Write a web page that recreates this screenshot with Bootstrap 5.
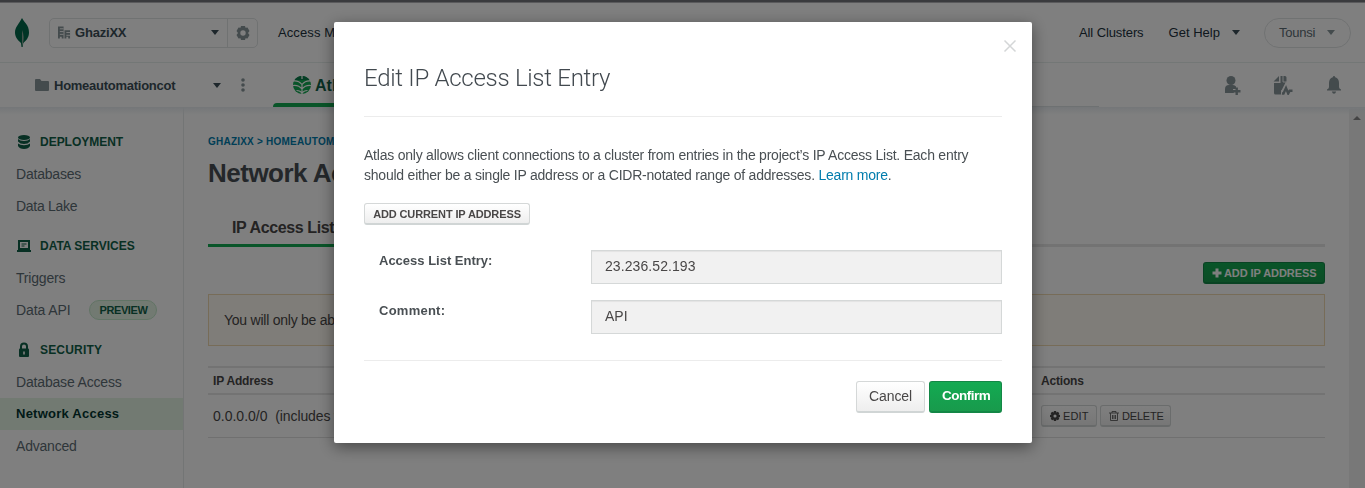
<!DOCTYPE html>
<html lang="en">
<head>
<meta charset="utf-8">
<meta name="viewport" content="width=device-width, initial-scale=1">
<title>Network Access</title>
<link href="https://cdn.jsdelivr.net/npm/bootstrap@5.3.0/dist/css/bootstrap.min.css" rel="stylesheet">
<style>
body{font:13px/20px "Liberation Sans",Arial,sans-serif;color:#3d4f58;height:100vh;overflow:hidden;background:#fff}
svg{display:block;flex:none}
.window-edge{height:3px;background:#75767d;border-bottom:1px solid #b4b4b8}
.org-bar{height:60px;border-bottom:1px solid #e7eeec;padding:0 14px;color:#21313c}
.org-picker{width:209px;height:30px;margin-left:19px;border:1px solid #e1e4e5;border-radius:5px}
.org-name{color:#3d4f58;letter-spacing:-.2px}
.org-gear{width:30px;border-left:1px solid #e1e4e5}
.caret{width:0;height:0;border:4px solid transparent;border-top:5px solid #3d4f58;border-bottom:0}
.user-pill{width:87px;height:30px;border:1px solid #e1e4e5;border-radius:15px;padding:0 15px 0 14px;color:#5d6c74}
.user-pill .caret{border-top-color:#89979b}
.project-bar{height:44px;padding-left:35px;padding-right:21px;position:relative}
.atlas-tab{width:88px;height:44px;padding:0 0 4px 21px;margin-left:27px;font-size:16px;color:#116149}
.atlas-tab::after{content:"";position:absolute;left:273px;bottom:0;width:100px;height:4px;background:#13aa52;border-radius:4px 0 0 0}
.tab-track{position:absolute;left:373px;width:726px;bottom:0;height:1px;background:#dde3e5}
.workspace{height:381px;position:relative}
.workspace::before{content:"";position:absolute;left:0;right:0;top:0;height:8px;background:linear-gradient(#e9eef2,rgba(255,255,255,0));z-index:1}
.side{width:184px;border-right:1px solid #e7eaeb;padding-top:19px}
.side-item{height:32px;padding-left:16px;letter-spacing:-.2px;color:#5d6c74;font-size:14px}
.side-head{font-size:12px;font-weight:700;letter-spacing:-.02px;color:#116149}
.side-head svg{width:16px;margin-right:8px}
.side-group+.side-group{margin-top:8px}
.side-item.current{background:#e4f4e4;color:#023430;font-weight:700;font-size:13px;letter-spacing:.24px}
.preview-tag{width:68px;height:20px;border:1px solid #c3e7ca;border-radius:10px;background:#e4f4e4;color:#116149;font-size:11px;font-weight:700;letter-spacing:-.42px;line-height:19px;margin-left:19px;text-align:center}
.main-pane{padding:25px 24px 0;color:#494747;position:relative}
.crumbs{font-size:10px;line-height:20px;font-weight:700;letter-spacing:.22px;color:#007cad}
.page-title{font-size:26px;line-height:32px;font-weight:700;letter-spacing:-.5px;margin:5px 0 0;color:#494f54}
.page-tabs{height:54px;margin-top:4px;border-bottom:3px solid #e7e7e7;font-size:16px;font-weight:700;letter-spacing:-.38px}
.page-tabs>div{height:54px;padding:25px 24px 0;border-bottom:3px solid #13aa52}
.btn-flat{font-size:11px;line-height:20px;height:22px;padding:0 8px;border-radius:3px;border:1px solid #d5d8d8;border-bottom:2px solid #d0d5d5;background:linear-gradient(#fff,#eee);color:#494747}
.btn-leaf{border:1px solid #138746;border-bottom-width:2px;background:linear-gradient(#13aa52,#189a4c);color:#fff;font-weight:700}
.notice{height:52px;margin-top:10px;padding:15px;background:#fefaf2;border:1px solid #efd9b0;font-size:14px;letter-spacing:-.24px}
.access-table{margin-top:20px}
.access-table>div{padding-left:5px}
.at-head{height:29px;border:solid #e7e7e7;border-width:2px 0;font-size:12px;font-weight:700;letter-spacing:-.18px}
.at-row{height:43px;border-bottom:1px solid #e1e1e1}
.at-row .at-main{font-size:14px}
.at-main{width:828px}
.scroller{width:16px;margin-top:2px;background:#f1f1f1}
.dim{--bs-backdrop-opacity:.5}
.entry-dialog{width:698px;max-width:none;margin:22px 0 0 334px}
.entry-dialog .modal-content{height:421px;border:0;border-radius:2px;padding:0 30px;box-shadow:0 4px 16px rgba(0,0,0,.45);color:#494747}
.entry-dialog .modal-header{height:95px;padding:17px 0 0;border-bottom:1px solid #ececec;border-radius:0}
.entry-title{font:300 24px/30px Roboto,"Liberation Sans",sans-serif;letter-spacing:-.28px;color:#42494f}
.dismiss{position:absolute;right:15px;top:17px;padding:0;border:0;background:none}
.entry-dialog .modal-body{padding:28px 0 0}
.intro{margin:0 -10px 18px 0;font-size:14px;letter-spacing:-.225px;color:#494f53}
.intro a{color:#007cad;text-decoration:none}
.field-row{height:34px;margin-bottom:16px}
.field-row label{width:227px;padding:1px 0 0 15px;font-weight:700;line-height:20px;letter-spacing:0;color:#494f53}
.field-row .form-control{width:411px;height:34px;padding:0 13px 2px;border:1px solid #d5d8d8;border-radius:0;background:#f1f1f1;box-shadow:inset 0 1px 1px rgba(0,0,0,.06);font-size:14px;color:#494747}
.entry-dialog .modal-footer{height:83px;border-top:1px solid #ececec;border-radius:0;padding:20px 0 31px;gap:4px}
.btn-act{height:32px;font-size:14px;line-height:28px;padding:0 12px;margin:0}
</style>
</head>
<body>
<div class="window-edge"></div>
<header class="org-bar d-flex align-items-center">
  <svg width="16" height="30" viewBox="0 0 16 30"><path d="M8 0c1 2 2 3 3.500 5C14 8 15 11 15 14.500c0 5-2.800 8-5.700 10.500L8.700 29H7.500L7 25C3.500 22 1 19 1 14.500 1 9 5 6 8 0z" fill="#00684a"/><path d="M8 12v13l.5 4L9 25c1-4 1-8-1-13z" fill="#8aa598"/></svg>
  <div class="org-picker d-flex">
    <div class="d-flex align-items-center flex-grow-1 ps-1">
      <svg class="ms-1 me-1" width="13" height="13" viewBox="0 0 14 13"><path d="M0 0h6v13H4v-2H2v2H0zM7 4h6v9h-2v-2H9v2H7z" fill="#89979b"/><path d="M2 2.500h4M2 5.500h4M2 8.500h4M9 6.500h4M9 9.500h4" stroke="#fff"/></svg>
      <b class="org-name flex-grow-1">GhaziXX</b><span class="caret me-2"></span>
    </div>
    <div class="org-gear d-flex align-items-center justify-content-center"><svg width="14" height="14" viewBox="0 0 14 14"><path d="M5 0h4l.5 1.800 2-.3L13.500 5 12 7l1.500 2-2 3.500-2-.3L9 14H5l-.5-1.800-2 .3L.5 9 2 7 .5 5l2-3.500 2 .3z" fill="#89979b"/><circle cx="7" cy="7" r="2.700" fill="#fff"/></svg></div>
  </div>
  <span class="text-nowrap" style="margin-left:20px;letter-spacing:.1px">Access Manager</span>
  <div class="ms-auto d-flex align-items-center text-nowrap">
    <span style="letter-spacing:-.1px">All Clusters</span>
    <span style="margin-left:25px;letter-spacing:.02px">Get Help</span><span class="caret" style="margin-left:12px"></span>
    <div class="user-pill d-flex align-items-center justify-content-between" style="margin-left:24px"><span style="letter-spacing:-.26px">Tounsi</span><span class="caret"></span></div>
  </div>
</header>
<div class="project-bar d-flex align-items-center">
  <svg width="14" height="12" viewBox="0 0 14 12"><path d="M0 1q0-1 1-1h4l1.500 2H13q1 0 1 1v8q0 1-1 1H1q-1 0-1-1z" fill="#89979b"/></svg>
  <b style="width:158px;padding:2px 0 0 5px;letter-spacing:-.26px">Homeautomationcot</b>
  <span class="caret" style="margin:1px 0 0 6px"></span>
  <svg style="margin-left:20px" width="4" height="14" viewBox="0 0 4 14" fill="#89979b"><circle cx="2" cy="2" r="1.800"/><circle cx="2" cy="7" r="1.800"/><circle cx="2" cy="12" r="1.800"/></svg>
  <div class="atlas-tab d-flex align-items-end"><svg style="margin-bottom:9px" width="18" height="18" viewBox="0 0 18 18"><circle cx="9" cy="9" r="9" fill="#13aa52"/><path d="M1.500 4a9 9 0 0 1 15 0z" fill="#0b7c4b"/><path d="M9 0v3M9 7.500V18M0 5c4-.5 7 1 9 3.500C11 6 14 4.500 18 5M0 9.500c4-.5 7 1 9 3.500 2-2.500 5-4 9-3.500M3.500 14.500c2.500 0 4.500 1 5.500 3 1-2 3-3 5.500-3" fill="none" stroke="#fff" stroke-width="1.200"/></svg><b style="margin:0 0 7px 4px">Atlas</b></div>
  <div class="tab-track"></div>
  <div class="ms-auto d-flex align-items-center" style="gap:31px">
    <svg width="20" height="20" viewBox="0 0 20 20" fill="#89979b"><circle cx="9" cy="5.500" r="4.500"/><path d="M3 18v-4q0-4 4-4h4q2 0 3 1.500V14h-3v3l1 1zM13.500 12.500h2.400V15h2.600v2.400h-2.600V20h-2.400v-2.600H11V15h2.500z"/></svg>
    <svg width="20" height="20" viewBox="0 0 20 20" fill="#89979b"><path d="M6 1v5.500H.5zM7.500 1H12q1.500 0 1.500 1.500V9L9 19.500H2.500Q1 19.500 1 18V8h6.500z"/><path d="M10 1v6h3.500" stroke="#fff" stroke-width=".9" fill="none"/><path d="M8 17.500h2l3-6 2.500 6.500 1.500-3h3" fill="none" stroke="#fff" stroke-width="4.500"/><path d="M9 18.500h1.500l2.500-5.500 2.200 5.500 1.500-2.800H19.500" fill="none" stroke="#89979b" stroke-width="2.400"/></svg>
    <svg width="20" height="20" viewBox="0 0 20 20" fill="#89979b"><path d="M10 1q1 0 1.200 1.200Q15 3.500 15 8v4q0 1.500 2 2.500v1H3v-1q2-1 2-2.500V8q0-4.500 3.800-5.800Q9 1 10 1zM7.800 16.500h4.400Q11.500 18.700 10 18.700t-2.200-2.200z"/></svg>
  </div>
</div>
<div class="workspace d-flex">
  <nav class="side flex-shrink-0">
    <div class="side-group">
      <div class="side-item side-head d-flex align-items-center"><svg height="16" viewBox="0 0 16 16" fill="#116149"><ellipse cx="8" cy="3.500" rx="6" ry="2.500"/><path d="M2 5q2 2 6 2t6-2v2.500Q12 10 8 10T2 7.500zM2 9.500q2 1.800 6 1.800t6-1.800V12q-1.500 3-6 3t-6-3z"/></svg>DEPLOYMENT</div>
      <div class="side-item d-flex align-items-center">Databases</div>
      <div class="side-item d-flex align-items-center" style="letter-spacing:-.3px">Data Lake</div>
    </div>
    <div class="side-group">
      <div class="side-item side-head d-flex align-items-center"><svg height="16" viewBox="0 0 16 16" fill="none" stroke="#116149"><path d="M3 3h10v8H3z" stroke-width="2"/><path d="M1 13h14" stroke-width="2"/><path d="M5.500 6h5M5.500 8h3"/></svg>DATA SERVICES</div>
      <div class="side-item d-flex align-items-center">Triggers</div>
      <div class="side-item d-flex align-items-center" style="letter-spacing:-.1px">Data API<span class="preview-tag">PREVIEW</span></div>
    </div>
    <div class="side-group">
      <div class="side-item side-head d-flex align-items-center" style="letter-spacing:.18px"><svg height="16" viewBox="0 0 16 16"><path d="M5 7V4.500a3 3 0 0 1 6 0V7" fill="none" stroke="#116149" stroke-width="2"/><rect x="3" y="6.500" width="10" height="8.500" rx="1" fill="#116149"/><path d="M8 9.500v3" stroke="#fff" stroke-width="1.600"/></svg>SECURITY</div>
      <div class="side-item d-flex align-items-center" style="letter-spacing:-.17px">Database Access</div>
      <div class="side-item current d-flex align-items-center">Network Access</div>
      <div class="side-item d-flex align-items-center">Advanced</div>
    </div>
  </nav>
  <main class="main-pane flex-grow-1">
    <div class="crumbs">GHAZIXX &gt; HOMEAUTOMATIONCOT</div>
    <h1 class="page-title">Network Access</h1>
    <div class="page-tabs d-flex"><div>IP Access List</div></div>
    <div class="d-flex justify-content-end" style="margin-top:15px"><button class="btn-flat btn-leaf d-flex align-items-center" style="width:122px;letter-spacing:-.08px;gap:2px"><svg width="10" height="10" viewBox="0 0 10 10"><path d="M5 .5v9M.5 5h9" stroke="#fff" stroke-width="3"/></svg><span class="text-nowrap">ADD IP ADDRESS</span></button></div>
    <div class="notice">You will only be able</div>
    <div class="access-table">
      <div class="at-head d-flex align-items-center"><span class="at-main">IP Address</span><span>Actions</span></div>
      <div class="at-row d-flex align-items-center"><span class="at-main">0.0.0.0/0&nbsp; <span style="letter-spacing:-.11px">(includes your</span></span>
        <div class="d-flex" style="gap:3px"><button class="btn-flat d-flex align-items-center" style="width:56px;gap:3px;letter-spacing:.1px"><svg width="10" height="10" viewBox="0 0 14 14"><path d="M5.500 0h3l.5 2 2-1 2 2-1 2 2 .5v3l-2 .5 1 2-2 2-2-1-.5 2h-3L5 12l-2 1-2-2 1-2-2-.5v-3L2 5 1 3l2-2 2 1z" fill="#494747"/><circle cx="7" cy="7" r="2.200" fill="#fff"/></svg>EDIT</button><button class="btn-flat d-flex align-items-center" style="width:71px;gap:3px;letter-spacing:-.18px"><svg width="10" height="10" viewBox="0 0 10 10" fill="none" stroke="#5d5d5d"><path d="M0 2h10M3 2V.5h4V2M1.500 2v7.500h7V2M3.500 4v4M5 4v4M6.500 4v4" stroke-width=".9"/></svg>DELETE</button></div></div>
    </div>
  </main>
  <div class="scroller"><svg width="16" height="18" viewBox="0 0 16 18"><path d="M4 11h8L8 7z" fill="#888"/></svg></div>
</div>

<div class="modal-backdrop show dim"></div>
<div class="modal d-block overflow-hidden" tabindex="-1" role="dialog">
  <div class="modal-dialog entry-dialog">
    <div class="modal-content">
      <div class="modal-header">
        <h2 class="entry-title m-0">Edit IP Access List Entry</h2>
        <button class="dismiss" aria-label="Close"><svg width="14" height="14" viewBox="0 0 14 14"><path d="M1.500 1.500l11 11M12.500 1.500l-11 11" stroke="#d4d6d7" stroke-width="1.500"/></svg></button>
      </div>
      <div class="modal-body">
        <p class="intro">Atlas only allows client connections to a cluster from entries in the project’s IP Access List. Each entry<br>should either be a single IP address or a CIDR-notated range of addresses. <a href="#">Learn more</a>.</p>
        <button class="btn-flat fw-bold text-nowrap" style="width:166px;letter-spacing:-.12px">ADD CURRENT IP ADDRESS</button>
        <div class="field-row d-flex" style="margin-top:25px"><label>Access List Entry:</label><input class="form-control" value="23.236.52.193" style="letter-spacing:.08px" readonly></div>
        <div class="field-row d-flex"><label style="letter-spacing:.25px">Comment:</label><input class="form-control" value="API" readonly></div>
      </div>
      <div class="modal-footer flex-nowrap">
        <button class="btn-flat btn-act" style="width:69px;letter-spacing:-.1px">Cancel</button>
        <button class="btn-flat btn-leaf btn-act" style="width:73px;font-size:13.5px;letter-spacing:-.5px">Confirm</button>
      </div>
    </div>
  </div>
</div>
<script src="https://cdn.jsdelivr.net/npm/bootstrap@5.3.0/dist/js/bootstrap.bundle.min.js"></script>
</body>
</html>
